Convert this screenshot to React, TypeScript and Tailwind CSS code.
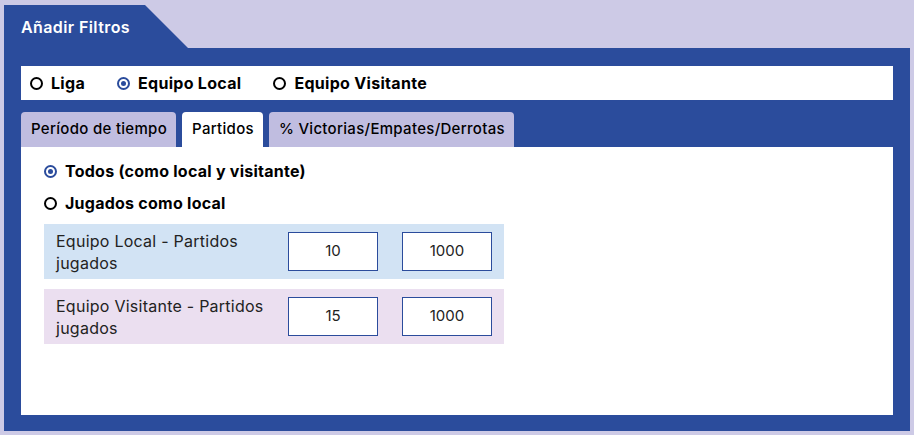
import { useState } from 'react';

const font = { fontFamily: 'Inter, "Open Sans", sans-serif' };

const Radio = ({ checked }: { checked: boolean }) =>
  checked ? (
    <span className="flex h-[13px] w-[13px] shrink-0 items-center justify-center rounded-full border-2 border-[#2b4c9c]">
      <span className="h-[5px] w-[5px] rounded-full bg-[#2b4c9c]" />
    </span>
  ) : (
    <span className="h-[13px] w-[13px] shrink-0 rounded-full border-2 border-black" />
  );

const RangeRow = ({ label, min, max, bg }: { label: string; min: string; max: string; bg: string }) => (
  <div className={`flex h-[55px] w-[460px] items-center pl-[12px] pr-[12px] ${bg}`}>
    <div className="w-[232px] pr-[20px] text-[16px] leading-[22px] tracking-[0.25px] text-[#222]">{label}</div>
    <div className="flex h-[39px] w-[90px] items-center justify-center border border-[#2b4c9c] bg-white text-[15px] text-[#222]">
      {min}
    </div>
    <div className="ml-[24px] flex h-[39px] w-[90px] items-center justify-center border border-[#2b4c9c] bg-white text-[15px] text-[#222]">
      {max}
    </div>
  </div>
);

export default function App() {
  const [team, setTeam] = useState('local');
  const [mode, setMode] = useState('todos');
  const tabs = ['Período de tiempo', 'Partidos', '% Victorias/Empates/Derrotas'];

  return (
    <div style={font} className="min-h-[435px] bg-[#cdcae6] px-[4px] pt-[5px] pb-[4px]">
      <div className="flex h-[43px] w-[184px] items-center bg-[#2b4c9c] pl-[17px] text-[16px] font-semibold tracking-[0.4px] text-white [clip-path:polygon(0_0,141px_0,100%_100%,0_100%)]">
        Añadir Filtros
      </div>
      <div className="bg-[#2b4c9c] px-[17px] pt-[18px] pb-[16px]">
        <div className="flex h-[34px] items-center bg-white pl-[9px] text-[16px] font-bold tracking-[0.3px] text-black">
          {[
            { id: 'liga', text: 'Liga' },
            { id: 'local', text: 'Equipo Local' },
            { id: 'visitante', text: 'Equipo Visitante' },
          ].map(({ id, text }) => (
            <label key={id} onClick={() => setTeam(id)} className="mr-[32px] flex cursor-pointer items-center gap-[8px]">
              <Radio checked={team === id} />
              <span>{text}</span>
            </label>
          ))}
        </div>

        <div className="mt-[12px] flex h-[35px] gap-[6px]">
          {tabs.map((t) => (
            <div
              key={t}
              className={`flex items-center rounded-t-[4px] pl-[10px] pr-[9px] text-[15px] font-medium tracking-[0.3px] text-black ${
                t === 'Partidos' ? 'bg-white' : 'bg-[#c0bde0]'
              }`}
            >
              {t}
            </div>
          ))}
        </div>

        <div className="h-[268px] bg-white px-[23px] pt-[14px]">
          <div className="flex flex-col gap-[12px] text-[16px] font-bold tracking-[0.25px] text-black">
            {[
              { id: 'todos', text: 'Todos (como local y visitante)' },
              { id: 'local', text: 'Jugados como local' },
            ].map(({ id, text }) => (
              <label key={id} onClick={() => setMode(id)} className="flex h-[20px] cursor-pointer items-center gap-[8px]">
                <Radio checked={mode === id} />
                <span>{text}</span>
              </label>
            ))}
          </div>
          <div className="mt-[11px] flex flex-col gap-[10px]">
            <RangeRow label="Equipo Local - Partidos jugados" min="10" max="1000" bg="bg-[#d2e3f4]" />
            <RangeRow label="Equipo Visitante - Partidos jugados" min="15" max="1000" bg="bg-[#ebdff0]" />
          </div>
        </div>
      </div>
    </div>
  );
}
